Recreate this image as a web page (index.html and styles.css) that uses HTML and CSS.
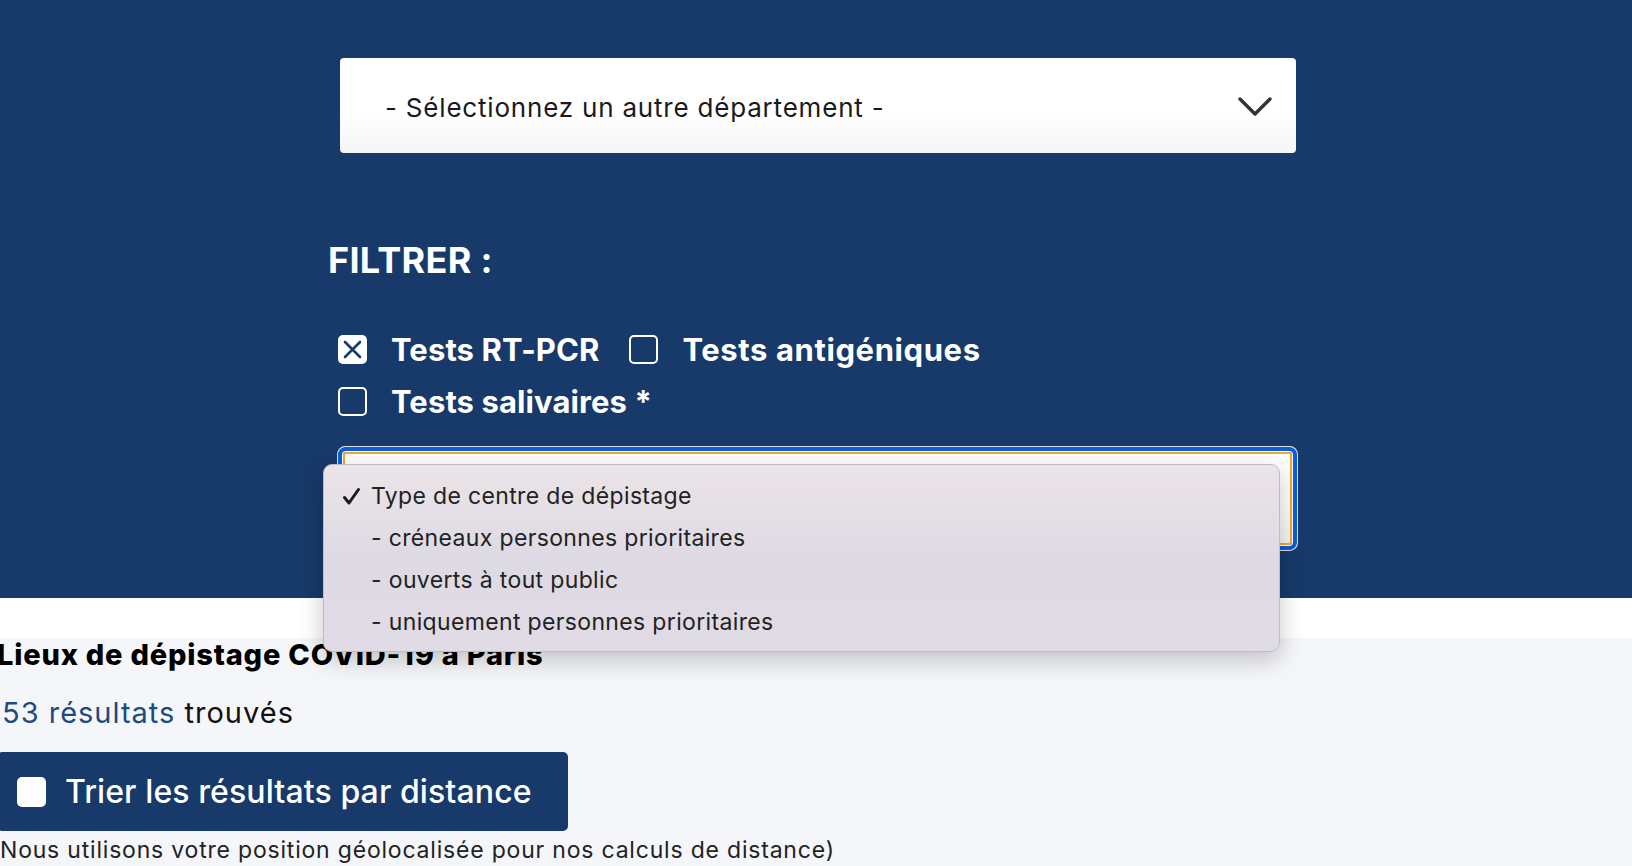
FILE: index.html
```html
<!DOCTYPE html>
<html lang="fr">
<head>
    <meta charset="UTF-8">
    <meta name="viewport" content="width=device-width, initial-scale=1.0">
    <title>Lieux de dépistage COVID-19 à Paris</title>
    <link rel="stylesheet" href="styles.css">
</head>
<body>
    <!-- Search / filter band -->
    <section class="hero">
        <div class="hero-inner">
            <div class="dept-select">
                <span>- Sélectionnez un autre département -</span>
                <svg class="chevron" width="34" height="20" viewBox="0 0 34 20">
                    <path d="M2 2 L17 17 L32 2" fill="none" stroke="#333" stroke-width="3.4" stroke-linecap="round" stroke-linejoin="round"/>
                </svg>
            </div>

            <h2 class="filter-title">FILTRER :</h2>

            <div class="filter-row first">
                <label class="check">
                    <span class="box checked">
                        <svg width="29" height="29" viewBox="0 0 29 29">
                            <path d="M7 7 L22 22 M22 7 L7 22" stroke="#173a6a" stroke-width="2.6" stroke-linecap="round"/>
                        </svg>
                    </span>
                    Tests RT-PCR
                </label>
                <label class="check">
                    <span class="box"></span>
                    <span class="wide">Tests antigéniques</span>
                </label>
            </div>
            <div class="filter-row">
                <label class="check">
                    <span class="box"></span>
                    Tests salivaires *
                </label>
            </div>

            <div class="type-select"></div>

            <!-- Native popup menu of the focused select -->
            <ul class="popup">
                <li class="selected">
                    <svg class="tick" width="19" height="19" viewBox="0 0 19 19">
                        <path d="M2.5 10.5 L7 16 L16.5 2.5" fill="none" stroke="#1c1c1c" stroke-width="3" stroke-linecap="round" stroke-linejoin="round"/>
                    </svg>
                    Type de centre de dépistage
                </li>
                <li>- créneaux personnes prioritaires</li>
                <li>- ouverts à tout public</li>
                <li>- uniquement personnes prioritaires</li>
            </ul>
        </div>
    </section>

    <div class="strip"></div>

    <!-- Results -->
    <section class="results">
        <h1>Lieux de dépistage COVID-19 à Paris</h1>
        <p class="count"><span class="num">53 résultats</span> trouvés</p>
        <button class="sort-btn">
            <span class="sort-box"></span>
            Trier les résultats par distance
        </button>
        <p class="note">Nous utilisons votre position géolocalisée pour nos calculs de distance)</p>
    </section>
</body>
</html>
```

FILE: styles.css
```css
/* Basic styling */
body {
    font-family: Inter, "Noto Sans", sans-serif;
    margin: 0;
    padding: 0;
    background-color: #f5f6fa;
    overflow: hidden;
    height: 866px;
}

.hero {
    background-color: #173a6a;
    height: 598px;
    padding-top: 58px;
    box-sizing: border-box;
}

.hero-inner {
    position: relative;
    margin-left: 328px;
    width: 970px;
}

/* Department select */
.dept-select {
    margin-left: 12px;
    width: 956px;
    height: 95px;
    box-sizing: border-box;
    padding: 0 24px 0 45px;
    display: flex;
    align-items: center;
    justify-content: space-between;
    background: linear-gradient(#ffffff 55%, #f6f6f6);
    border-radius: 4px;
    font-size: 26px;
    letter-spacing: 0.8px;
    color: #1a1a1a;
}

.dept-select span {
    margin-top: 3px;
}

.chevron {
    margin-top: 2px;
}

/* Filters */
.filter-title {
    margin: 87px 0 0;
    font-size: 36px;
    line-height: 40px;
    font-weight: 700;
    color: #fff;
    letter-spacing: 0.3px;
}

.filter-row {
    display: flex;
    gap: 30px;
    margin-left: 10px;
    height: 52px;
    align-items: center;
}

.filter-row.first {
    margin-top: 43px;
}

.check {
    display: flex;
    align-items: center;
    gap: 24px;
    font-size: 31px;
    font-weight: 700;
    color: #fff;
    letter-spacing: 0.1px;
}

.check .wide {
    letter-spacing: 0.6px;
}

.box {
    width: 29px;
    height: 29px;
    box-sizing: border-box;
    border: 2px solid #fff;
    border-radius: 5px;
    flex-shrink: 0;
}

.box.checked {
    background-color: #fff;
    border: none;
}

.box svg {
    display: block;
}

.type-select {
    margin: 25px 0 0 15px;
    width: 949px;
    height: 93px;
    box-sizing: border-box;
    border: 2px solid #f2a72e;
    border-radius: 3px;
    background: linear-gradient(#ffffff 55%, #f4f4f4);
    box-shadow: 0 0 0 1px #fff, 0 0 0 5px #0b5ed7, 0 0 0 6px rgba(255, 255, 255, 0.85);
}

/* Popup menu */
.popup {
    position: absolute;
    left: -5px;
    top: 406px;
    width: 957px;
    height: 188px;
    box-sizing: border-box;
    margin: 0;
    padding: 10px 0 0 47px;
    list-style: none;
    background: linear-gradient(#ebe4e8, #dedae4 50%, #e0dbe4);
    border: 1px solid #bfbcc4;
    border-radius: 9px;
    box-shadow: 0 8px 24px rgba(0, 0, 0, 0.22);
    font-size: 23px;
    letter-spacing: 0.35px;
    color: #222;
    z-index: 2;
}

.popup li {
    position: relative;
    height: 42px;
    line-height: 42px;
}

.tick {
    position: absolute;
    left: -29px;
    top: 12px;
}

/* Results */
.strip {
    height: 40px;
    background-color: #fff;
}

.results {
    margin-left: -3px;
}

.results h1 {
    margin: 0;
    font-size: 29px;
    line-height: 34px;
    font-weight: 800;
    color: #000;
    letter-spacing: 0.8px;
}

.count {
    margin: 25px 0 0 5px;
    font-size: 29px;
    line-height: 32px;
    color: #111;
    letter-spacing: 1px;
}

.num {
    color: #1d4a80;
}

.sort-btn {
    margin: 23px 0 0;
    width: 571px;
    height: 79px;
    display: flex;
    align-items: center;
    gap: 19px;
    padding: 0 0 0 20px;
    border: none;
    border-radius: 5px;
    background-color: #173a6a;
    color: #fff;
    font-family: Inter, "Noto Sans", sans-serif;
    font-size: 32px;
    font-weight: 500;
    letter-spacing: 0.1px;
}

.sort-box {
    width: 29px;
    height: 30px;
    background-color: #fff;
    border-radius: 5px;
}

.note {
    margin: 4px 0 0 3px;
    font-size: 23px;
    line-height: 30px;
    color: #222;
    letter-spacing: 0.8px;
}
```
